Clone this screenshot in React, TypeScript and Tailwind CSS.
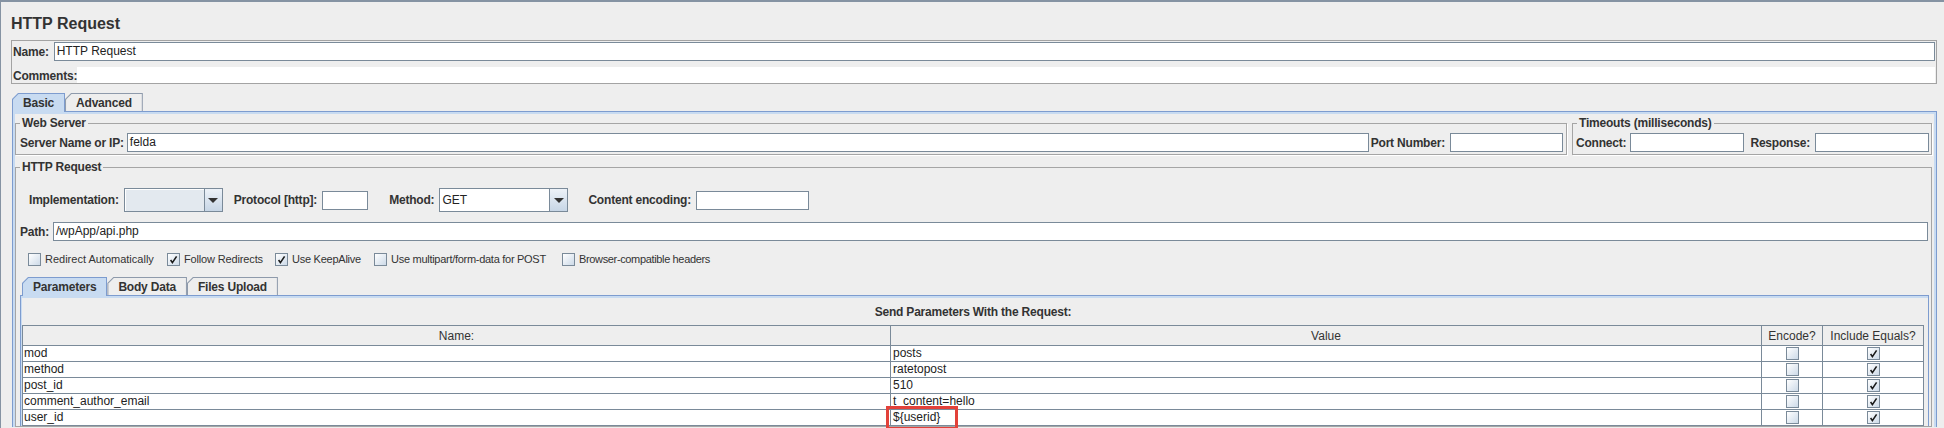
import React from "react";

type Kids = { className?: string; children?: React.ReactNode };

function Label({ className = "", children }: Kids) {
  return (
    <span
      className={`text-[12px] font-bold leading-[14px] tracking-[-0.2px] whitespace-nowrap text-[#333] ${className}`}
    >
      {children}
    </span>
  );
}

function Field({ className = "", children }: Kids) {
  return (
    <div
      className={`h-[19px] border border-[#7a8a99] bg-white pl-[2px] text-[12px] leading-[17px] text-[#222] whitespace-nowrap overflow-hidden ${className}`}
    >
      {children}
    </div>
  );
}

function Combo({ className = "", value = "", light = false }: { className?: string; value?: string; light?: boolean }) {
  return (
    <div className={`flex h-[24px] border border-[#7a8a99] ${className}`}>
      <div
        className={`flex-1 flex items-center pl-[2px] text-[12px] text-[#222] ${
          light ? "bg-[#e3e9ef] shadow-[inset_1px_1px_0_#ffffff]" : "bg-white"
        }`}
      >
        {value}
      </div>
      <div className="w-[18px] border-l border-[#7a8a99] bg-linear-to-b from-[#edf2f8] to-[#c7d6e6] flex items-center justify-center">
        <svg width="10" height="5" viewBox="0 0 10 5">
          <path d="M0 0H10L5 5Z" fill="#333" />
        </svg>
      </div>
    </div>
  );
}

function Check({ checked = false }: { checked?: boolean }) {
  return (
    <div className="w-[13px] h-[13px] shrink-0 border border-[#7a8a99] bg-linear-to-br from-white to-[#cddae8] flex items-center justify-center">
      {checked && (
        <svg width="11" height="11" viewBox="0 0 11 11">
          <path d="M2.6 6 L4.4 8.6 L8.6 2.4" stroke="#1a1a1a" strokeWidth="1.6" fill="none" />
        </svg>
      )}
    </div>
  );
}

function Tab({ label, selected = false }: { label: string; selected?: boolean }) {
  return (
    <div className={`relative ${selected ? "z-10 h-[19px] -mb-px" : "h-[18px]"}`}>
      <div
        className={`h-full pt-px pl-px pr-px [clip-path:polygon(6px_0,100%_0,100%_100%,0_100%,0_6px)] ${
          selected ? "bg-[#7d9ccf]" : "bg-[#8e9aab]"
        }`}
      >
        <div
          className={`h-full px-[10px] flex items-center text-[12px] font-bold tracking-[-0.2px] text-[#333] [clip-path:polygon(5.5px_0,100%_0,100%_100%,0_100%,0_5.5px)] ${
            selected ? "bg-[#c8dbf1]" : "bg-[#eeeeee]"
          }`}
        >
          {label}
        </div>
      </div>
    </div>
  );
}

function Legend({ children }: Kids) {
  return (
    <legend className="ml-[4px] px-[2px] text-[12px] font-bold leading-[14px] tracking-[-0.2px] text-[#333]">
      {children}
    </legend>
  );
}

const rows: [string, string][] = [
  ["mod", "posts"],
  ["method", "ratetopost"],
  ["post_id", "510"],
  ["comment_author_email", "t_content=hello"],
  ["user_id", "${userid}"],
];

export default function App() {
  return (
    <div className="w-[1944px] h-[428px] overflow-hidden bg-[#eeeeee] border-t-2 border-l border-[#8593a3] text-[#333] font-['Liberation_Sans',Arial,sans-serif]">
      <div className="h-[38px] pl-[10px] pt-[12px] text-[16px] leading-[20px] font-bold text-[#333]">HTTP Request</div>

      <div className="ml-[10px] mr-[7px] border border-[#a3a3a3] px-px pt-px">
        <div className="flex h-[20px] items-start">
          <Label className="h-[19px] flex items-center">Name:</Label>
          <Field className="ml-[5px] flex-1">HTTP Request</Field>
        </div>
        <div className="flex h-[21px] items-end">
          <Label>Comments:</Label>
          <div className="flex-1 h-[16px] bg-white" />
        </div>
      </div>

      <div className="mt-[9px] ml-[11px] mr-[7px]">
        <div className="flex items-end h-[18px]">
          <Tab label="Basic" selected />
          <Tab label="Advanced" />
        </div>
        <div className="border-t border-l border-r border-[#7d9ccf]">
          <div className="border-t-2 border-l-2 border-r-2 border-[#c8dbf1] pr-[2px]">
            <div className="flex gap-[5px] pt-[2px]">
              <fieldset className="flex-1 min-w-0 border border-[#a5a5a5] pb-[2px] shadow-[1px_1px_0_#ffffff]">
                <Legend>Web Server</Legend>
                <div className="flex items-center h-[19px] mt-[3px] pl-[4px] pr-[3px]">
                  <Label>Server Name or IP:</Label>
                  <Field className="ml-[3px] flex-1">felda</Field>
                  <Label className="ml-[2px]">Port Number:</Label>
                  <Field className="ml-[5px] w-[113px]" />
                </div>
              </fieldset>
              <fieldset className="w-[360px] shrink-0 min-w-0 border border-[#a5a5a5] pb-[2px] shadow-[1px_1px_0_#ffffff]">
                <Legend>Timeouts (milliseconds)</Legend>
                <div className="flex items-center h-[19px] mt-[3px] pl-[3px] pr-[2px]">
                  <Label>Connect:</Label>
                  <Field className="ml-[4px] flex-1" />
                  <Label className="ml-[6px]">Response:</Label>
                  <Field className="ml-[5px] flex-1" />
                </div>
              </fieldset>
            </div>

            <fieldset className="mt-[5px] min-w-0 border border-[#a5a5a5]">
              <Legend>HTTP Request</Legend>
              <div className="flex flex-col">
                <div className="flex items-center h-[24px] mt-[14px] pl-[13px]">
                  <Label>Implementation:</Label>
                  <Combo className="ml-[5px] w-[99px]" light />
                  <Label className="ml-[11px]">Protocol [http]:</Label>
                  <Field className="ml-[5px] w-[46px]" />
                  <Label className="ml-[21px]">Method:</Label>
                  <Combo className="ml-[5px] w-[129px]" value="GET" />
                  <Label className="ml-[20px]">Content encoding:</Label>
                  <Field className="ml-[5px] w-[113px]" />
                </div>

                <div className="flex items-center h-[19px] mt-[10px] pl-[4px] pr-[3px]">
                  <Label>Path:</Label>
                  <Field className="ml-[4px] flex-1">/wpApp/api.php</Field>
                </div>

                <div className="flex items-center h-[16px] mt-[10px] pl-[12px] text-[11px] text-[#333] whitespace-nowrap">
                  <div className="flex items-center w-[139px]">
                    <Check />
                    <span className="ml-[4px]">Redirect Automatically</span>
                  </div>
                  <div className="flex items-center w-[108px]">
                    <Check checked />
                    <span className="ml-[4px] tracking-[-0.15px]">Follow Redirects</span>
                  </div>
                  <div className="flex items-center w-[99px]">
                    <Check checked />
                    <span className="ml-[4px] tracking-[-0.25px]">Use KeepAlive</span>
                  </div>
                  <div className="flex items-center w-[188px]">
                    <Check />
                    <span className="ml-[4px] tracking-[-0.28px]">Use multipart/form-data for POST</span>
                  </div>
                  <div className="flex items-center">
                    <Check />
                    <span className="ml-[4px] tracking-[-0.35px]">Browser-compatible headers</span>
                  </div>
                </div>

                <div className="mt-[10px] ml-[4px] mr-[2px]">
                  <div className="flex items-end h-[18px] pl-[2px]">
                    <Tab label="Parameters" selected />
                    <Tab label="Body Data" />
                    <Tab label="Files Upload" />
                  </div>
                  <div className="border-t border-l border-r border-[#7d9ccf]">
                    <div className="border-t-2 border-l border-[#c8dbf1] pr-[4px]">
                      <div className="h-[27px] flex items-center justify-center">
                        <Label>Send Parameters With the Request:</Label>
                      </div>
                      <div className="border-t border-l border-r border-[#7a8a99] text-[12px] text-[#222]">
                        <div className="grid grid-cols-[868px_871px_61px_1fr] h-[20px] border-b border-[#7a8a99] bg-[#eeeeee] text-[#333]">
                          <div className="border-r border-[#7a8a99] flex items-center justify-center">Name:</div>
                          <div className="border-r border-[#7a8a99] flex items-center justify-center">Value</div>
                          <div className="border-r border-[#7a8a99] flex items-center justify-center">Encode?</div>
                          <div className="flex items-center justify-center whitespace-nowrap">Include Equals?</div>
                        </div>
                        {rows.map(([n, v], i) => (
                          <div
                            key={n}
                            className="grid grid-cols-[868px_871px_61px_1fr] h-[16px] border-b border-[#7a8a99] bg-white"
                          >
                            <div className="border-r border-[#7a8a99] pl-[1px] leading-[15px] whitespace-nowrap">{n}</div>
                            <div className="relative border-r border-[#7a8a99] pl-[2px] leading-[15px] whitespace-nowrap">
                              {v}
                              {i === 4 && (
                                <div className="absolute left-[-5px] top-[-4px] w-[72px] h-[24px] border-[3px] border-[#e2413a]" />
                              )}
                            </div>
                            <div className="border-r border-[#7a8a99] flex items-center justify-center">
                              <Check />
                            </div>
                            <div className="flex items-center justify-center">
                              <Check checked />
                            </div>
                          </div>
                        ))}
                      </div>
                    </div>
                  </div>
                </div>
              </div>
            </fieldset>
          </div>
        </div>
      </div>
    </div>
  );
}
